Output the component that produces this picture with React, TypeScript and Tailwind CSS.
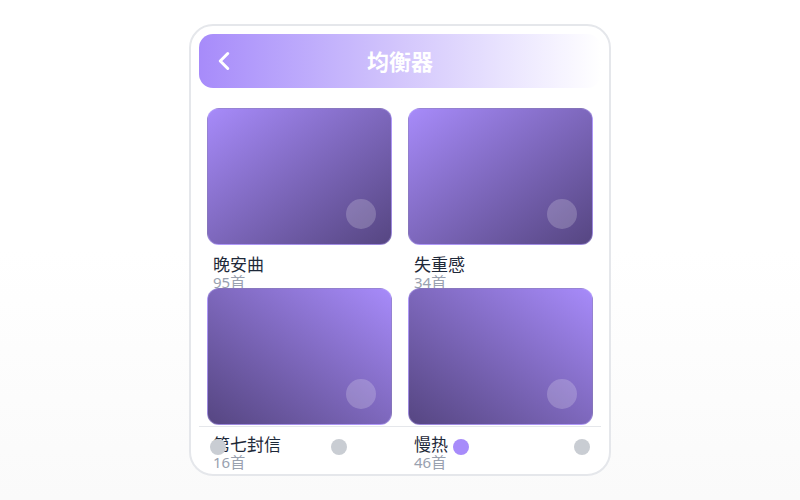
import React from 'react';
import { ChevronLeft } from 'lucide-react';

interface Playlist {
    name: string;
    count: number;
}

const playlists: Playlist[] = [
    { name: '晚安曲', count: 95 },
    { name: '失重感', count: 34 },
    { name: '第七封信', count: 16 },
    { name: '慢热', count: 46 },
];

const PlaylistCard: React.FC<{ item: Playlist; row: number }> = ({ item, row }) => (
    <div className="h-[180px]">
        <div
            className={`h-[137px] rounded-xl border border-violet-300/40 flex items-end justify-end p-[15px] ${
                row === 0
                    ? 'bg-gradient-to-br from-[#a78bfa] to-[#564682]'
                    : 'bg-gradient-to-bl from-[#a78bfa] to-[#564682]'
            }`}
        >
            <div className="w-[30px] h-[30px] rounded-full bg-white/20"></div>
        </div>
        <div className="px-1.5 pt-2.5">
            <div className="text-[17px] leading-5 text-gray-800">{item.name}</div>
            <div className="text-[15px] leading-[15px] text-gray-400">{item.count}首</div>
        </div>
    </div>
);

const App: React.FC = () => {
    const activeTab = 2;

    return (
        <div
            className="w-[800px] h-[500px] bg-gradient-to-b from-white from-50% to-[#fafafa] flex items-center justify-center"
            style={{ fontFamily: '"Noto Sans", "Noto Sans CJK SC", sans-serif' }}
        >
            <div className="relative w-[422px] h-[452px] rounded-[24px] border-2 border-gray-200 bg-white p-2 overflow-hidden">
                <div className="relative h-[54px] rounded-[14px] bg-gradient-to-r from-[#a78bfa] via-[#d3c6fc] to-white flex items-center justify-center">
                    <ChevronLeft size={30} strokeWidth={2.4} className="absolute left-2.5 text-white" />
                    <span className="text-[22px] font-bold text-white">均衡器</span>
                </div>

                <div className="px-2 pt-5 grid grid-cols-2 gap-x-4">
                    {playlists.map((item, index) => (
                        <PlaylistCard key={index} item={item} row={Math.floor(index / 2)} />
                    ))}
                </div>

                <div className="absolute left-2 right-2 bottom-2 h-[40px] border-t border-gray-200 flex items-center justify-between px-[11px]">
                    {[0, 1, 2, 3].map(i => (
                        <span
                            key={i}
                            className={`w-4 h-4 rounded-full ${i === activeTab ? 'bg-[#a78bfa]' : 'bg-[#c9cdd3]'}`}
                        ></span>
                    ))}
                </div>
            </div>
        </div>
    );
};

export default App;
